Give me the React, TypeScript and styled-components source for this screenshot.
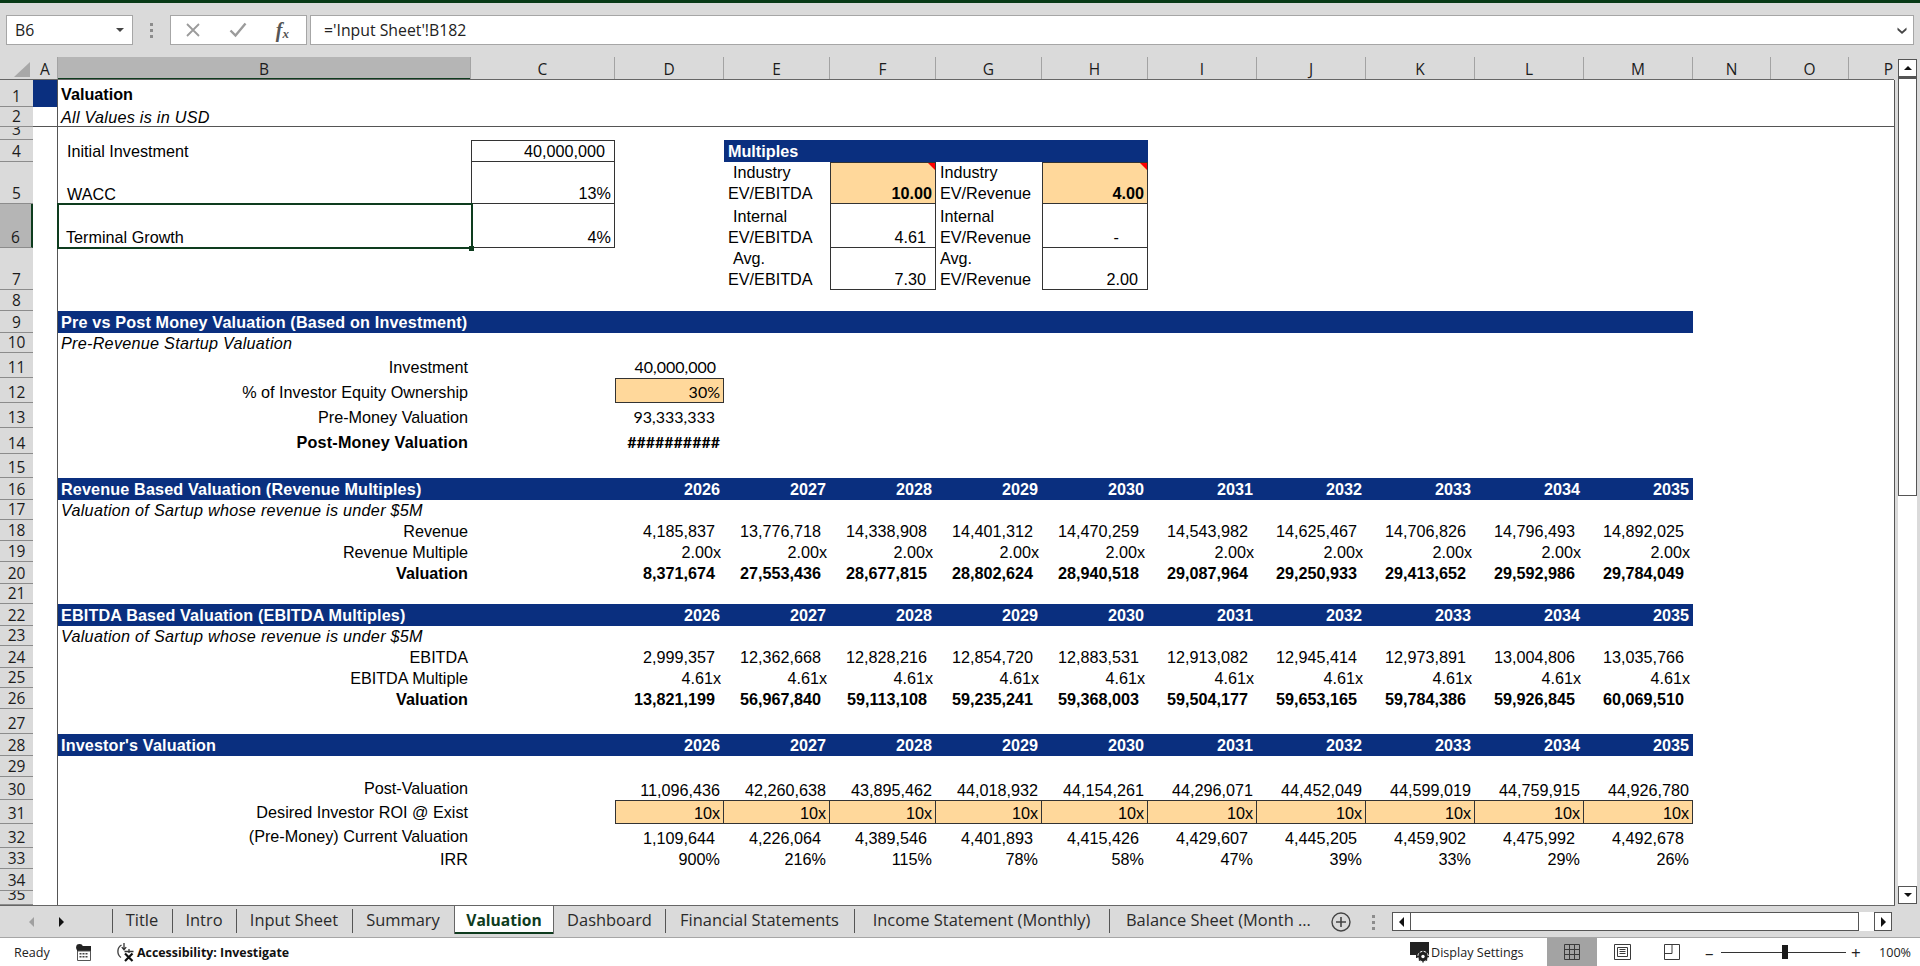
import React from "react";
import styled, { createGlobalStyle } from "styled-components";

const BLUE = "#0a2f7f";
const ORANGE = "#ffd89b";
const GREEN = "#0e3c1e";
const CHROME = "#dadada";
const UI_FONT = `"Open Sans", "Noto Sans", sans-serif`;
const CELL_FONT = `"Liberation Sans", Arial, sans-serif`;

const Global = createGlobalStyle`
  html, body { margin: 0; padding: 0; background: ${CHROME}; }
  * { box-sizing: border-box; }
`;

const Page = styled.div`
  width: 1920px;
  height: 966px;
  display: flex;
  flex-direction: column;
  overflow: hidden;
  background: ${CHROME};
  font-family: ${UI_FONT};
`;

const TitleStrip = styled.div`
  height: 3px;
  flex: none;
  background: #083a16;
`;

/* ---------- formula bar ---------- */
const FormulaBar = styled.div`
  height: 54px;
  flex: none;
  display: flex;
  align-items: flex-start;
  padding: 12px 6px 0 6px;
`;
const FieldBox = styled.div`
  height: 30px;
  background: #fff;
  border: 1px solid #a6a6a6;
  display: flex;
  align-items: center;
`;
const NameBox = styled(FieldBox)`
  width: 127px;
  padding: 0 7px 0 8px;
  justify-content: space-between;
  font-size: 15.8px;
  color: #222;
`;
const Caret = styled.span`
  width: 0;
  height: 0;
  border-left: 4px solid transparent;
  border-right: 4px solid transparent;
  border-top: 4px solid #444;
  margin-right: 1px;
`;
const Grip = styled.div<{ $w: number; $h: number }>`
  width: ${(p) => p.$w}px;
  height: ${(p) => p.$h}px;
  flex: none;
  display: flex;
  flex-direction: column;
  align-items: center;
  justify-content: center;
  gap: 3px;
  i {
    display: block;
    width: 3px;
    height: 3px;
    background: #8c8c8c;
  }
`;
const FxBox = styled(FieldBox)`
  width: 137px;
  flex: none;
  margin-right: 3px;
  justify-content: space-between;
  padding: 0 17px 0 14px;
`;
const FxText = styled.span`
  font-family: "Liberation Serif", serif;
  font-style: italic;
  font-weight: 700;
  font-size: 20px;
  line-height: 20px;
  color: #555;
  sub {
    font-size: 13px;
    vertical-align: -1px;
    line-height: 0;
  }
`;
const FormulaInput = styled(FieldBox)`
  flex: 1;
  padding: 0 6px 0 13px;
  justify-content: space-between;
  font-size: 15.8px;
  color: #222;
`;

/* ---------- workspace ---------- */
const Workspace = styled.div`
  flex: none;
  height: 848px;
  display: flex;
`;
const SheetArea = styled.div`
  width: 1895px;
  flex: none;
  display: flex;
  flex-direction: column;
`;
const COLUMNS = "33px 25px 413px 144px 109px 106px 106px 106px 106px 109px 109px 109px 109px 109px 78px 78px 45px";

const ColumnHeader = styled.div`
  height: 23px;
  flex: none;
  display: grid;
  grid-template-columns: ${COLUMNS};
  width: 1894px;
  border-bottom: 1px solid #666;
  overflow: hidden;
`;
const Corner = styled.div`
  position: relative;
  &::after {
    content: "";
    position: absolute;
    right: 3px;
    bottom: 3px;
    width: 0;
    height: 0;
    border-left: 16px solid transparent;
    border-bottom: 15px solid #a8a8a8;
  }
`;
const ColLetter = styled.div<{ $sel?: boolean; $clip?: boolean }>`
  display: flex;
  align-items: center;
  justify-content: ${(p) => (p.$clip ? "flex-end" : "center")};
  font-size: 15.5px;
  color: #1c1c1c;
  border-right: ${(p) => (p.$clip ? "none" : "1px solid #a3a3a3")};
  background: ${(p) => (p.$sel ? "#b5b5b5" : "transparent")};
  box-shadow: ${(p) => (p.$sel ? `inset 0 -2px 0 ${GREEN}` : "none")};
  padding-right: ${(p) => (p.$clip ? "1px" : "0")};
  padding-top: 1px;
`;
const RowsArea = styled.div`
  flex: 1;
  background: #fff;
  border-right: 1px solid #555;
  overflow: hidden;
`;
const SheetRow = styled.div<{ $h: number; $freeze?: boolean }>`
  height: ${(p) => p.$h}px;
  display: grid;
  grid-template-columns: ${COLUMNS};
  grid-template-rows: ${(p) => p.$h}px;
  ${(p) => (p.$freeze ? "box-shadow: inset 0 -1px 0 #555;" : "")}
  font-family: ${CELL_FONT};
  font-size: 16.2px;
  line-height: 20px;
  color: #000;
`;
const RowNum = styled.div<{ $sel?: boolean }>`
  grid-column: 1;
  background: ${(p) => (p.$sel ? "#b5b5b5" : CHROME)};
  border-bottom: 1px solid #8c8c8c;
  border-right: ${(p) => (p.$sel ? `2px solid ${GREEN}` : "none")};
  display: flex;
  align-items: flex-end;
  justify-content: center;
  overflow: hidden;
  font-family: ${UI_FONT};
  font-size: 15.5px;
  line-height: 20px;
  color: #1c1c1c;
`;
const ColA = styled.div<{ $fill?: boolean }>`
  grid-column: 2;
  background: ${(p) => (p.$fill ? BLUE : "transparent")};
  border-right: 1px solid #555;
`;

type CellProps = {
  $col: number;
  $span?: number;
  $fill?: string;
  $box?: string;
  $end?: boolean;
  $pr?: number;
  $pl?: number;
  $pt?: number;
  $pb?: number;
  $left?: boolean;
  $bold?: boolean;
  $italic?: boolean;
  $light?: boolean;
  $lato?: boolean;
  $track?: number;
};
const Cell = styled.div<CellProps>`
  grid-column: ${(p) => p.$col} / span ${(p) => p.$span ?? 1};
  position: relative;
  display: flex;
  white-space: nowrap;
  align-items: ${(p) => (p.$end ? "flex-end" : "center")};
  justify-content: ${(p) => (p.$left ? "flex-start" : "flex-end")};
  padding: ${(p) => p.$pt ?? 0}px ${(p) => p.$pr ?? 0}px ${(p) => p.$pb ?? 0}px ${(p) => p.$pl ?? 0}px;
  background: ${(p) => p.$fill ?? "transparent"};
  font-weight: ${(p) => (p.$bold ? 700 : 400)};
  font-style: ${(p) => (p.$italic ? "italic" : "normal")};
  color: ${(p) => (p.$light ? "#fff" : "#000")};
  letter-spacing: ${(p) => p.$track ?? 0}px;
  ${(p) => (p.$lato ? `font-family: "Lato", sans-serif; font-size: 16px;` : "")}
  ${(p) => (p.$box?.includes("t") ? "border-top: 1px solid #333;" : "")}
  ${(p) => (p.$box?.includes("r") ? "border-right: 1px solid #333;" : "")}
  ${(p) => (p.$box?.includes("b") ? "border-bottom: 1px solid #333;" : "")}
  ${(p) => (p.$box?.includes("l") ? "border-left: 1px solid #333;" : "")}
`;
const NoteCell = styled(Cell)`
  &::after {
    content: "";
    position: absolute;
    top: 0;
    right: 0;
    width: 0;
    height: 0;
    border-top: 7px solid #f00;
    border-left: 7px solid transparent;
  }
`;
const SelectedCell = styled(Cell)`
  z-index: 2;
  &::before {
    content: "";
    position: absolute;
    left: -1px;
    right: -2px;
    top: -1px;
    bottom: -1px;
    border: 2px solid ${GREEN};
  }
  &::after {
    content: "";
    position: absolute;
    right: -3px;
    bottom: -3px;
    width: 5px;
    height: 5px;
    background: ${GREEN};
  }
`;
const PairLabel = styled(Cell).attrs({ $left: true, $end: true, $pl: 4 })`
  flex-direction: column;
  align-items: flex-start;
  justify-content: flex-end;
  line-height: 21px;
`;
const FirstLine = styled.span<{ $indent?: boolean }>`
  padding-left: ${(p) => (p.$indent ? "5px" : "0")};
`;

const Row: React.FC<{
  n: number;
  h: number;
  sel?: boolean;
  freeze?: boolean;
  fillA?: boolean;
  children?: React.ReactNode;
}> = ({ n, h, sel, freeze, fillA, children }) => (
  <SheetRow $h={h} $freeze={freeze}>
    <RowNum $sel={sel}>{n}</RowNum>
    <ColA $fill={fillA} />
    {children}
  </SheetRow>
);

const YEARS = [2026, 2027, 2028, 2029, 2030, 2031, 2032, 2033, 2034, 2035];
const FIRST = 5; // column D

const Band: React.FC<{ n: number; h: number; title: string; years?: boolean }> = ({ n, h, title, years }) => (
  <Row n={n} h={h}>
    {years ? (
      <>
        <Cell $col={3} $span={2} $fill={BLUE} $left $pl={3} $bold $light $track={0.14}>
          {title}
        </Cell>
        {YEARS.map((y, i) => (
          <Cell key={y} $col={FIRST + i} $fill={BLUE} $pr={4} $bold $light>
            {y}
          </Cell>
        ))}
      </>
    ) : (
      <Cell $col={3} $span={12} $fill={BLUE} $left $pl={3} $bold $light $track={0.16}>
        {title}
      </Cell>
    )}
  </Row>
);

const Label: React.FC<{ bold?: boolean; track?: number; pt?: number; pb?: number; children: React.ReactNode }> = ({
  bold,
  track,
  pt,
  pb,
  children,
}) => (
  <Cell $col={3} $pr={3} $bold={bold} $track={track} $pt={pt} $pb={pb}>
    {children}
  </Cell>
);
const Note: React.FC<{ children: React.ReactNode }> = ({ children }) => (
  <Cell $col={3} $left $pl={3} $italic $track={0.27}>
    {children}
  </Cell>
);
const Series: React.FC<{ values: string[]; pr?: number; bold?: boolean; end?: boolean }> = ({ values, pr = 9, bold, end }) => (
  <>
    {values.map((v, i) => (
      <Cell key={i} $col={FIRST + i} $pr={pr} $bold={bold} $end={end}>
        {v}
      </Cell>
    ))}
  </>
);

const PairCell: React.FC<{ col: number; top: string; bottom: string; indent?: boolean }> = ({ col, top, bottom, indent }) => (
  <PairLabel $col={col}>
    <FirstLine $indent={indent}>{top}</FirstLine>
    <span>{bottom}</span>
  </PairLabel>
);

/* ---------- vertical scrollbar ---------- */
const VScroll = styled.div`
  flex: 1;
  display: flex;
  flex-direction: column;
  padding: 2px 3px 1px 3px;
`;
const ScrollBtn = styled.div<{ $h?: number; $w?: number }>`
  ${(p) => (p.$h ? `height: ${p.$h}px;` : "")}
  ${(p) => (p.$w ? `width: ${p.$w}px;` : "")}
  flex: none;
  background: #fff;
  border: 1px solid #555;
  display: flex;
  align-items: center;
  justify-content: center;
`;
const Thumb = styled.div`
  height: 419px;
  flex: none;
  background: #fff;
  border: 1px solid #555;
  border-top-width: 2px;
`;
const Track = styled.div`
  flex: 1;
  background: #fff;
`;
const Tri = styled.span<{ $dir: "up" | "down" | "left" | "right"; $color?: string; $s?: number }>`
  width: 0;
  height: 0;
  ${(p) => {
    const s = p.$s ?? 4;
    const c = p.$color ?? "#111";
    if (p.$dir === "up") return `border-left:${s}px solid transparent;border-right:${s}px solid transparent;border-bottom:${s}px solid ${c};`;
    if (p.$dir === "down") return `border-left:${s}px solid transparent;border-right:${s}px solid transparent;border-top:${s}px solid ${c};`;
    if (p.$dir === "left") return `border-top:${s}px solid transparent;border-bottom:${s}px solid transparent;border-right:${s}px solid ${c};`;
    return `border-top:${s}px solid transparent;border-bottom:${s}px solid transparent;border-left:${s}px solid ${c};`;
  }}
`;

/* ---------- sheet tabs ---------- */
const TabBar = styled.div`
  height: 33px;
  flex: none;
  display: flex;
  position: relative;
  border-bottom: 1px solid #a6a6a6;
  &::before {
    content: "";
    position: absolute;
    top: 0;
    left: 0;
    width: 1895px;
    height: 1px;
    background: #666;
  }
`;
const TabNav = styled.div`
  width: 112px;
  flex: none;
  display: flex;
  align-items: center;
  padding: 2px 0 0 29px;
  gap: 25px;
`;
const Tab = styled.div<{ $w: number; $active?: boolean; $noSep?: boolean; $start?: boolean }>`
  width: ${(p) => p.$w}px;
  flex: none;
  height: ${(p) => (p.$active ? "29px" : "31px")};
  position: relative;
  display: flex;
  align-items: center;
  justify-content: ${(p) => (p.$start ? "flex-start" : "center")};
  padding-left: ${(p) => (p.$start ? "17px" : "0")};
  padding-bottom: ${(p) => (p.$active ? "0" : "2px")};
  white-space: nowrap;
  font-size: ${(p) => (p.$active ? "15.6px" : "16.45px")};
  color: #2a2a2a;
  ${(p) =>
    p.$active
      ? `background:#fff;font-weight:700;color:${GREEN};border-left:1px solid #666;border-right:1px solid #666;border-top:1px solid #666;box-shadow:inset 0 -2px 0 ${GREEN};`
      : ""}
  ${(p) =>
    !p.$active && !p.$noSep
      ? `&::before{content:"";position:absolute;left:0;top:4px;height:24px;width:1px;background:#555;}`
      : ""}
`;
const TabTools = styled.div`
  width: 70px;
  flex: none;
  display: flex;
  align-items: center;
  gap: 3px;
  padding: 2px 0 0 9px;
  svg {
    flex: none;
  }
`;
const HScroll = styled.div`
  margin-top: 7px;
  width: 500px;
  height: 19px;
  display: flex;
  background: #fff;
`;
const HThumb = styled.div`
  width: 448px;
  flex: none;
  border: 1px solid #555;
  border-left: 0;
  background: #fff;
`;
const HTrack = styled.div`
  flex: 1;
`;

/* ---------- status bar ---------- */
const StatusBar = styled.div`
  flex: 1;
  background: #fff;
  display: flex;
  align-items: stretch;
  padding: 0 11px 0 14px;
  font-size: 12.6px;
  color: #222;
`;
const StatusItem = styled.div<{ $w?: number; $ml?: number; $bold?: boolean; $big?: boolean }>`
  display: flex;
  align-items: center;
  white-space: nowrap;
  flex: none;
  ${(p) => (p.$w ? `width: ${p.$w}px;` : "")}
  ${(p) => (p.$ml ? `margin-left: ${p.$ml}px;` : "")}
  ${(p) => (p.$bold ? "font-weight: 700; color: #111; font-size: 12.4px;" : "")}
  ${(p) => (p.$big ? "font-size: 17px;" : "")}
`;
const ViewBtn = styled.div<{ $active?: boolean }>`
  width: 50px;
  flex: none;
  display: flex;
  align-items: center;
  justify-content: center;
  background: ${(p) => (p.$active ? "#a3a3a3" : "transparent")};
  ${(p) => (p.$active ? "margin-left: 24px;" : "")}
`;
const ZoomTrack = styled.div`
  width: 125px;
  margin-left: 6px;
  flex: none;
  position: relative;
  &::before {
    content: "";
    position: absolute;
    left: 0;
    right: 0;
    top: 14px;
    height: 1px;
    background: #333;
  }
`;
const ZoomHandle = styled.div`
  position: absolute;
  left: 61px;
  top: 7px;
  width: 6px;
  height: 14px;
  background: #1a1a1a;
`;
const Spacer = styled.div`
  flex: 1;
`;

const XIcon = () => (
  <svg width="16" height="16" viewBox="0 0 16 16" fill="none">
    <path d="M2 2l12 12M14 2L2 14" stroke="#9b9b9b" strokeWidth="1.8" />
  </svg>
);
const CheckIcon = () => (
  <svg width="18" height="16" viewBox="0 0 18 16" fill="none">
    <path d="M1.5 8.5l5 5L16.5 1.5" stroke="#9b9b9b" strokeWidth="2.4" />
  </svg>
);
const Chevron = () => (
  <svg width="10" height="8" viewBox="0 0 10 8">
    <path d="M0.5 1.5l4.5 4 4.5-4v2.5L5 8 .5 4z" fill="#444" />
  </svg>
);
const MacroIcon = () => (
  <svg width="15" height="17" viewBox="0 0 15 17">
    <circle cx="3.5" cy="3.5" r="3.4" fill="#222" />
    <path d="M5 2h10v4H5zM1 6h14v1H1z" fill="#222" />
    <path d="M1.5 7h13v9.5h-13z" fill="none" stroke="#555" />
    <path d="M3.5 9h2v1.6h-2zM6.5 9h2v1.6h-2zM9.5 9h2v1.6h-2zM3.5 12h2v1.6h-2zM6.5 12h2v1.6h-2zM9.5 12h2v1.6h-2z" fill="#444" />
  </svg>
);
const AccessIcon = () => (
  <svg width="20" height="20" viewBox="0 0 20 20" fill="none">
    <path d="M6.5 3A7.5 7.5 0 0 0 6 15.5" stroke="#444" strokeWidth="1.4" />
    <path d="M9 1v6.5M6.8 5.2L9 7.8l2.2-2.6M9.5 9.5h9M14 7v4" stroke="#333" strokeWidth="1.3" />
    <path d="M10 11.5l7.5 7.5M17.5 11.5L10 19" stroke="#111" strokeWidth="2.2" />
  </svg>
);
const DisplayIcon = () => (
  <svg width="19" height="21" viewBox="0 0 19 21">
    <path d="M0 0h19v13H0zM6 13h5v3H6z" fill="#222" />
    <circle cx="13" cy="14.5" r="5.2" fill="#222" stroke="#fff" strokeWidth="1" />
    <path d="M13 8.5v12M7 14.5h12M9 10.5l8 8M17 10.5l-8 8" stroke="#222" strokeWidth="1.4" />
    <circle cx="13" cy="14.5" r="1.7" fill="#fff" />
  </svg>
);
const GridIcon = () => (
  <svg width="16" height="16" viewBox="0 0 16 16" fill="none" stroke="#3a3a3a" strokeWidth="1">
    <path d="M.5.5h15v15H.5zM5.5.5v15M10.5.5v15M.5 5.5h15M.5 10.5h15" />
  </svg>
);
const PageIcon = () => (
  <svg width="17" height="16" viewBox="0 0 17 16" fill="none" stroke="#3a3a3a" strokeWidth="1">
    <path d="M.5.5h16v15H.5zM3.5 3.5h10v9h-10zM5.5 5.5h6M5.5 7.5h6M5.5 9.5h6" />
  </svg>
);
const BreakIcon = () => (
  <svg width="17" height="16" viewBox="0 0 17 16" fill="none" stroke="#3a3a3a" strokeWidth="1">
    <path d="M.5.5h15v15H.5zM.5 9.5h7.5V.5" />
  </svg>
);
const AddIcon = () => (
  <svg width="20" height="20" viewBox="0 0 20 20" fill="none" stroke="#444">
    <circle cx="10" cy="10" r="9" strokeWidth="1.4" />
    <path d="M10 5v10M5 10h10" strokeWidth="1.6" />
  </svg>
);

const TABS: { name: string; w: number; active?: boolean; noSep?: boolean; start?: boolean }[] = [
  { name: "Title", w: 60 },
  { name: "Intro", w: 64 },
  { name: "Input Sheet", w: 116 },
  { name: "Summary", w: 102 },
  { name: "Valuation", w: 100, active: true },
  { name: "Dashboard", w: 111, noSep: true },
  { name: "Financial Statements", w: 189 },
  { name: "Income Statement (Monthly)", w: 255 },
  { name: "Balance Sheet (Month  ...", w: 213, start: true },
];

const LETTERS = "ABCDEFGHIJKLMNO".split("");

export default function App() {
  return (
    <Page>
      <Global />
      <TitleStrip />
      <FormulaBar>
        <NameBox>
          B6
          <Caret />
        </NameBox>
        <Grip $w={37} $h={30}>
          <i />
          <i />
          <i />
        </Grip>
        <FxBox>
          <XIcon />
          <CheckIcon />
          <FxText>
            f<sub>x</sub>
          </FxText>
        </FxBox>
        <FormulaInput>
          ='Input Sheet'!B182
          <Chevron />
        </FormulaInput>
      </FormulaBar>

      <Workspace>
        <SheetArea>
          <ColumnHeader>
            <Corner />
            {LETTERS.map((l) => (
              <ColLetter key={l} $sel={l === "B"}>
                {l}
              </ColLetter>
            ))}
            <ColLetter $clip>P</ColLetter>
          </ColumnHeader>
          <RowsArea>
            <Row n={1} h={27} fillA>
              <Cell $col={3} $left $pl={3} $bold>
                Valuation
              </Cell>
            </Row>
            <Row n={2} h={20} freeze>
              <Note>All Values is in USD</Note>
            </Row>
            <Row n={3} h={13} />
            <Row n={4} h={22}>
              <Cell $col={3} $left $pl={9}>
                Initial Investment
              </Cell>
              <Cell $col={4} $box="trbl" $pr={9}>
                40,000,000
              </Cell>
              <Cell $col={6} $span={4} $fill={BLUE} $left $pl={4} $bold $light>
                Multiples
              </Cell>
            </Row>
            <Row n={5} h={42}>
              <Cell $col={3} $left $end $pl={9}>
                WACC
              </Cell>
              <Cell $col={4} $box="rbl" $end $pr={3}>
                13%
              </Cell>
              <PairCell col={6} top="Industry" bottom="EV/EBITDA" indent />
              <NoteCell $col={7} $box="trbl" $end $fill={ORANGE} $bold $pr={3}>
                10.00
              </NoteCell>
              <PairCell col={8} top="Industry" bottom="EV/Revenue" />
              <NoteCell $col={9} $box="trbl" $end $fill={ORANGE} $bold $pr={3}>
                4.00
              </NoteCell>
            </Row>
            <Row n={6} h={44} sel>
              <SelectedCell $col={3} $left $end $pl={8} $pb={1}>
                Terminal Growth
              </SelectedCell>
              <Cell $col={4} $box="rbl" $end $pr={3}>
                4%
              </Cell>
              <PairCell col={6} top="Internal" bottom="EV/EBITDA" indent />
              <Cell $col={7} $box="rbl" $end $pr={9}>
                4.61
              </Cell>
              <PairCell col={8} top="Internal" bottom="EV/Revenue" />
              <Cell $col={9} $box="rbl" $end $pr={28}>
                -
              </Cell>
            </Row>
            <Row n={7} h={42}>
              <PairCell col={6} top="Avg." bottom="EV/EBITDA" indent />
              <Cell $col={7} $box="rbl" $end $pr={9}>
                7.30
              </Cell>
              <PairCell col={8} top="Avg." bottom="EV/Revenue" />
              <Cell $col={9} $box="rbl" $end $pr={9}>
                2.00
              </Cell>
            </Row>
            <Row n={8} h={21} />

            <Band n={9} h={22} title="Pre vs Post Money Valuation (Based on Investment)" />
            <Row n={10} h={20}>
              <Note>Pre-Revenue Startup Valuation</Note>
            </Row>
            <Row n={11} h={25}>
              <Label pt={2}>Investment</Label>
              <Cell $col={5} $lato $pr={8} $pt={2}>
                40,000,000
              </Cell>
            </Row>
            <Row n={12} h={25}>
              <Label pt={2}>% of Investor Equity Ownership</Label>
              <Cell $col={5} $lato $box="trbl" $fill={ORANGE} $pr={3} $pt={2}>
                30%
              </Cell>
            </Row>
            <Row n={13} h={25}>
              <Label pt={2}>Pre-Money Valuation</Label>
              <Cell $col={5} $lato $pr={9} $pt={2}>
                93,333,333
              </Cell>
            </Row>
            <Row n={14} h={26}>
              <Label bold track={0.16} pt={2}>
                Post-Money Valuation
              </Label>
              <Cell $col={5} $lato $bold $pr={4} $pt={2}>
                ##########
              </Cell>
            </Row>
            <Row n={15} h={24} />

            <Band n={16} h={22} title="Revenue Based Valuation (Revenue Multiples)" years />
            <Row n={17} h={20}>
              <Note>Valuation of Sartup whose revenue is under $5M</Note>
            </Row>
            <Row n={18} h={21}>
              <Label>Revenue</Label>
              <Series values={["4,185,837", "13,776,718", "14,338,908", "14,401,312", "14,470,259", "14,543,982", "14,625,467", "14,706,826", "14,796,493", "14,892,025"]} />
            </Row>
            <Row n={19} h={21}>
              <Label>Revenue Multiple</Label>
              <Series pr={3} values={Array(10).fill("2.00x")} />
            </Row>
            <Row n={20} h={22}>
              <Label bold>Valuation</Label>
              <Series bold values={["8,371,674", "27,553,436", "28,677,815", "28,802,624", "28,940,518", "29,087,964", "29,250,933", "29,413,652", "29,592,986", "29,784,049"]} />
            </Row>
            <Row n={21} h={20} />

            <Band n={22} h={22} title="EBITDA Based Valuation (EBITDA Multiples)" years />
            <Row n={23} h={20}>
              <Note>Valuation of Sartup whose revenue is under $5M</Note>
            </Row>
            <Row n={24} h={22}>
              <Label>EBITDA</Label>
              <Series values={["2,999,357", "12,362,668", "12,828,216", "12,854,720", "12,883,531", "12,913,082", "12,945,414", "12,973,891", "13,004,806", "13,035,766"]} />
            </Row>
            <Row n={25} h={20}>
              <Label>EBITDA Multiple</Label>
              <Series pr={3} values={Array(10).fill("4.61x")} />
            </Row>
            <Row n={26} h={21}>
              <Label bold>Valuation</Label>
              <Series bold values={["13,821,199", "56,967,840", "59,113,108", "59,235,241", "59,368,003", "59,504,177", "59,653,165", "59,784,386", "59,926,845", "60,069,510"]} />
            </Row>
            <Row n={27} h={25} />

            <Band n={28} h={22} title="Investor's Valuation" years />
            <Row n={29} h={21} />
            <Row n={30} h={23}>
              <Label pb={2}>Post-Valuation</Label>
              <Series end pr={4} values={["11,096,436", "42,260,638", "43,895,462", "44,018,932", "44,154,261", "44,296,071", "44,452,049", "44,599,019", "44,759,915", "44,926,780"]} />
            </Row>
            <Row n={31} h={24}>
              <Label pb={1}>Desired Investor ROI @ Exist</Label>
              {YEARS.map((y, i) => (
                <Cell key={y} $col={FIRST + i} $end $box={i === 0 ? "trbl" : "trb"} $fill={ORANGE} $pr={3}>
                  10x
                </Cell>
              ))}
            </Row>
            <Row n={32} h={24}>
              <Label>(Pre-Money) Current Valuation</Label>
              <Series end values={["1,109,644", "4,226,064", "4,389,546", "4,401,893", "4,415,426", "4,429,607", "4,445,205", "4,459,902", "4,475,992", "4,492,678"]} />
            </Row>
            <Row n={33} h={21}>
              <Label>IRR</Label>
              <Series end pr={4} values={["900%", "216%", "115%", "78%", "58%", "47%", "39%", "33%", "29%", "26%"]} />
            </Row>
            <Row n={34} h={22} />
            <Row n={35} h={14} />
          </RowsArea>
        </SheetArea>
        <VScroll>
          <ScrollBtn $h={18}>
            <Tri $dir="up" />
          </ScrollBtn>
          <Thumb />
          <Track />
          <ScrollBtn $h={18}>
            <Tri $dir="down" />
          </ScrollBtn>
        </VScroll>
      </Workspace>

      <TabBar>
        <TabNav>
          <Tri $dir="left" $color="#a0a0a0" $s={5} />
          <Tri $dir="right" $s={5} />
        </TabNav>
        {TABS.map((t) => (
          <Tab key={t.name} $w={t.w} $active={t.active} $noSep={t.noSep} $start={t.start}>
            {t.name}
          </Tab>
        ))}
        <TabTools>
          <AddIcon />
          <Grip $w={38} $h={20}>
            <i />
            <i />
            <i />
          </Grip>
        </TabTools>
        <HScroll>
          <ScrollBtn $w={19}>
            <Tri $dir="left" $s={5} />
          </ScrollBtn>
          <HThumb />
          <HTrack />
          <ScrollBtn $w={18}>
            <Tri $dir="right" $s={5} />
          </ScrollBtn>
        </HScroll>
      </TabBar>

      <StatusBar>
        <StatusItem $w={62}>Ready</StatusItem>
        <StatusItem $w={39}>
          <MacroIcon />
        </StatusItem>
        <StatusItem $w={22}>
          <AccessIcon />
        </StatusItem>
        <StatusItem $bold>Accessibility: Investigate</StatusItem>
        <Spacer />
        <StatusItem $w={21}>
          <DisplayIcon />
        </StatusItem>
        <StatusItem $w={92}>Display Settings</StatusItem>
        <ViewBtn $active>
          <GridIcon />
        </ViewBtn>
        <ViewBtn>
          <PageIcon />
        </ViewBtn>
        <ViewBtn>
          <BreakIcon />
        </ViewBtn>
        <StatusItem $w={10} $ml={8} $big>
          –
        </StatusItem>
        <ZoomTrack>
          <ZoomHandle />
        </ZoomTrack>
        <StatusItem $w={11} $ml={5} $big>
          +
        </StatusItem>
        <StatusItem $w={30} $ml={17}>
          100%
        </StatusItem>
      </StatusBar>
    </Page>
  );
}
